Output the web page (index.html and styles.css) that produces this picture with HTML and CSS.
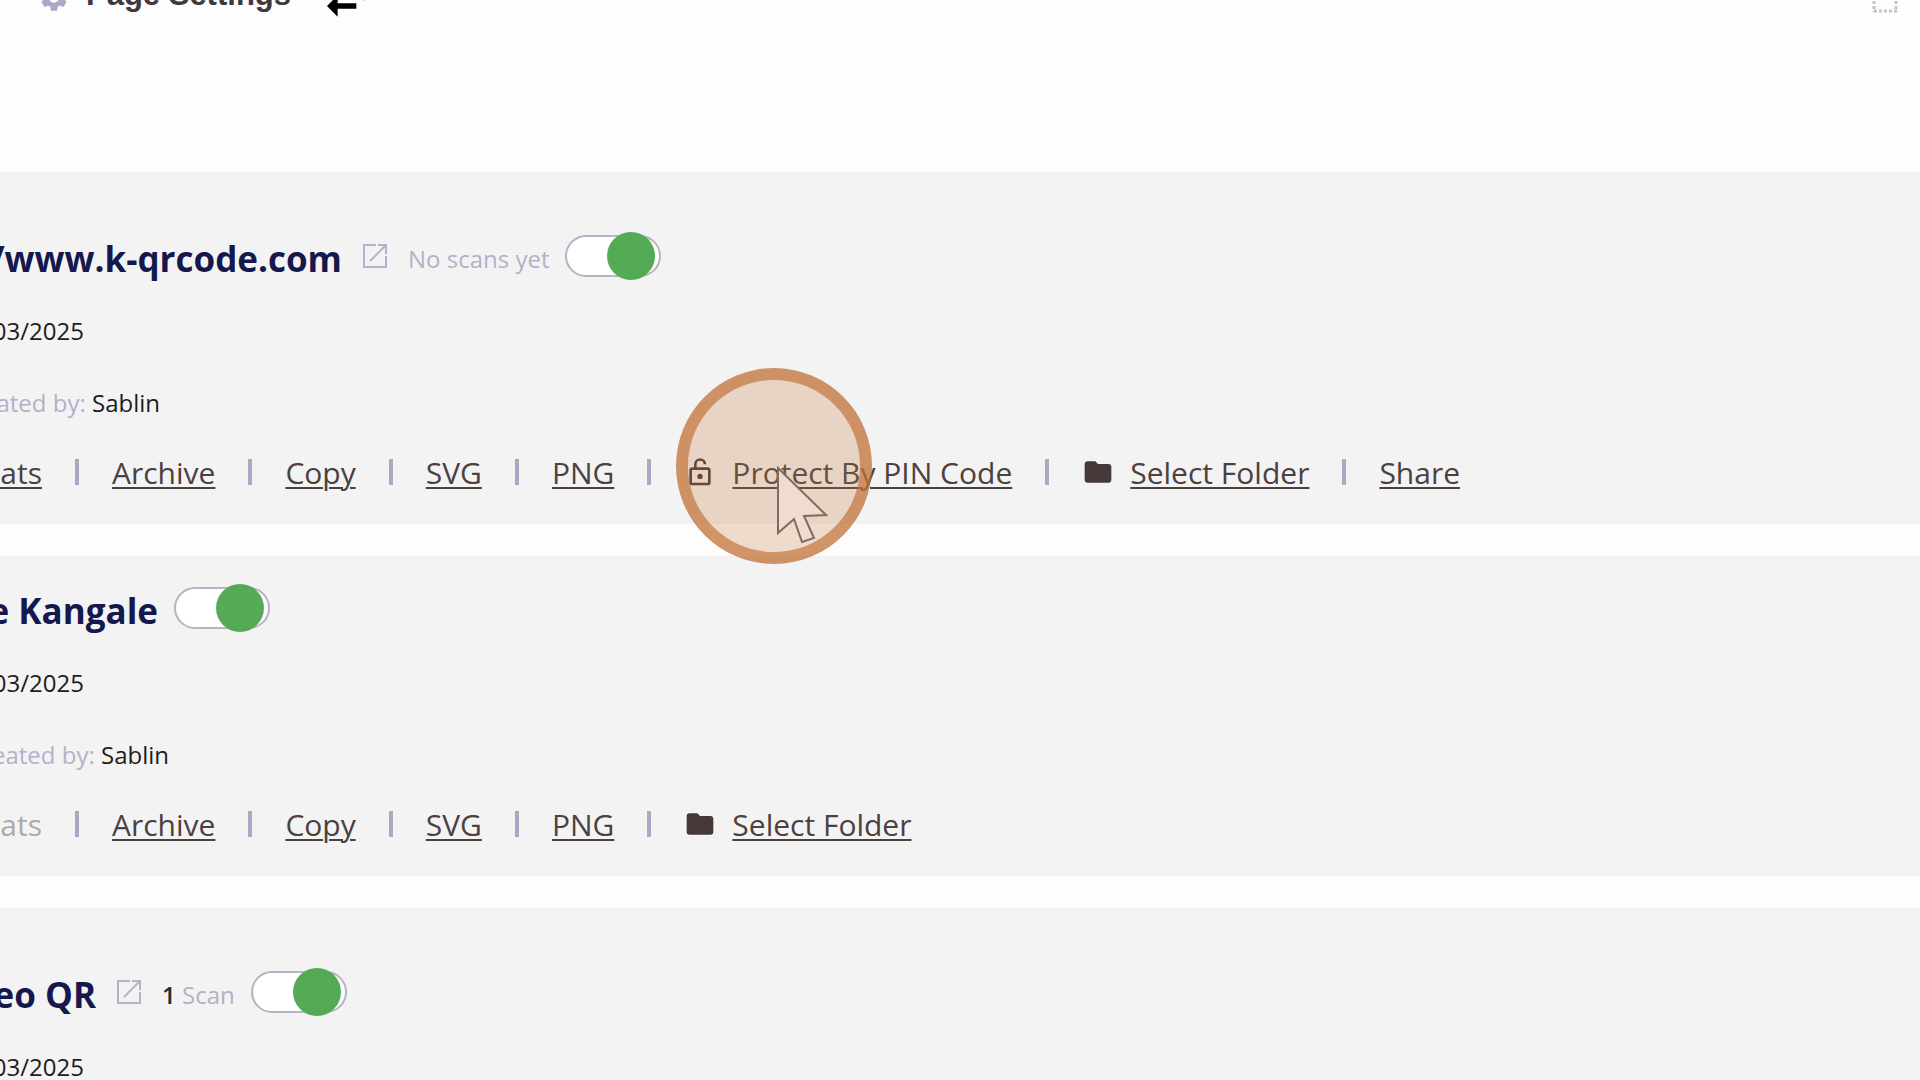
FILE: index.html
```html
<!DOCTYPE html>
<html lang="en">
<head>
    <meta charset="UTF-8">
    <meta name="viewport" content="width=device-width, initial-scale=1.0">
    <title>QR Codes</title>
    <link rel="stylesheet" href="styles.css">
</head>
<body>
    <svg class="sprite" aria-hidden="true">
        <symbol id="open" viewBox="0 0 24 24">
            <path d="M13 1H1v22h22V12M15 1h8v9M23 1L7 17" fill="none" stroke="currentColor" stroke-width="2"/>
        </symbol>
        <symbol id="folder" viewBox="0 0 24 24">
            <path d="M10 4H4c-1.1 0-2 .9-2 2v12c0 1.1.9 2 2 2h16c1.1 0 2-.9 2-2V8c0-1.1-.9-2-2-2h-8l-2-2z" fill="currentColor"/>
        </symbol>
    </svg>

    <header class="toolbar">
        <svg class="gear" viewBox="0 0 24 24"><path fill="currentColor" d="M19.14 12.94c.04-.3.06-.61.06-.94s-.02-.64-.07-.94l2.03-1.58c.18-.14.23-.41.12-.61l-1.92-3.32c-.12-.22-.37-.29-.59-.22l-2.39.96c-.5-.38-1.03-.7-1.62-.94l-.36-2.54c-.04-.24-.24-.41-.48-.41h-3.84c-.24 0-.43.17-.47.41l-.36 2.54c-.59.24-1.13.57-1.62.94l-2.39-.96c-.22-.08-.47 0-.59.22L2.74 8.87c-.12.21-.08.47.12.61l2.03 1.58c-.05.3-.09.63-.09.94s.02.64.07.94l-2.03 1.58c-.18.14-.23.41-.12.61l1.92 3.32c.12.22.37.29.59.22l2.39-.96c.5.38 1.03.7 1.62.94l.36 2.54c.05.24.24.41.48.41h3.84c.24 0 .44-.17.47-.41l.36-2.54c.59-.24 1.13-.56 1.62-.94l2.39.96c.22.08.47 0 .59-.22l1.92-3.32c.12-.22.07-.47-.12-.61l-2.01-1.58zM12 15.6c-1.98 0-3.6-1.62-3.6-3.6s1.62-3.6 3.6-3.6 3.6 1.62 3.6 3.6-1.62 3.6-3.6 3.6z"/></svg>
        <span class="toolbar-label">Page Settings</span>
        <svg class="swap" viewBox="0 0 24 24"><path d="M6.99 11L3 15l3.99 4v-3H14v-2H6.99v-3zM21 9l-3.99-4v3H10v2h7.01v3L21 9z"/></svg>
        <svg class="dots" viewBox="0 0 26 30"><path d="M2 3V29M24 3V29M2 28H26" fill="none" stroke="currentColor" stroke-width="3" stroke-dasharray="3 2"/></svg>
    </header>

    <main class="list">
        <section class="card card-tall">
            <div class="row title-row">
                <h2 class="cut cut-site">/www.k-qrcode.com</h2>
                <a class="open" href="#" aria-label="Open page"><svg><use href="#open"/></svg></a>
                <span class="scans">No scans yet</span>
                <input class="toggle" type="checkbox" aria-label="Active" checked>
            </div>
            <div class="row"><span class="cut cut-date">03/2025</span></div>
            <div class="row"><span class="cut cut-author"><span class="muted">ated by:</span>&nbsp;Sablin</span></div>
            <ul class="links">
                <li><a class="cut cut-stats" href="#">tats</a></li>
                <li><a href="#">Archive</a></li>
                <li><a href="#">Copy</a></li>
                <li><a href="#">SVG</a></li>
                <li><a href="#">PNG</a></li>
                <li>
                    <svg class="icon" viewBox="0 0 24 24"><path fill="currentColor" d="M18 8.5h-8.5V6.2a2.6 2.6 0 0 1 5.2 0h2A4.6 4.6 0 0 0 7.5 6.2v2.3H6c-1.1 0-2 .9-2 2v9.5c0 1.1.9 2 2 2h12c1.1 0 2-.9 2-2v-9.5c0-1.1-.9-2-2-2zM18 20H6v-9.5h12V20zm-6-2.7a2 2 0 1 0 0-4 2 2 0 0 0 0 4z"/></svg>
                    <a href="#">Protect By PIN Code</a>
                    <!-- click highlight with the mouse pointer -->
                    <div class="highlight">
                        <svg class="pointer" viewBox="0 0 52 78"><path d="M2 2V67L18 53L26 76L38 72L28 50L50 49Z"/></svg>
                    </div>
                </li>
                <li><svg class="icon"><use href="#folder"/></svg><a href="#">Select Folder</a></li>
                <li><a href="#">Share</a></li>
            </ul>
        </section>

        <section class="card">
            <div class="row title-row">
                <h2 class="cut cut-name">e Kangale</h2>
                <input class="toggle" type="checkbox" aria-label="Active" checked>
            </div>
            <div class="row"><span class="cut cut-date">03/2025</span></div>
            <div class="row"><span class="cut cut-author-wide"><span class="muted">eated by:</span>&nbsp;Sablin</span></div>
            <ul class="links">
                <li><span class="cut cut-stats disabled">tats</span></li>
                <li><a href="#">Archive</a></li>
                <li><a href="#">Copy</a></li>
                <li><a href="#">SVG</a></li>
                <li><a href="#">PNG</a></li>
                <li><svg class="icon"><use href="#folder"/></svg><a href="#">Select Folder</a></li>
            </ul>
        </section>

        <section class="card card-tall">
            <div class="row title-row">
                <h2 class="cut cut-video">eo QR</h2>
                <a class="open" href="#" aria-label="Open page"><svg><use href="#open"/></svg></a>
                <span class="scans"><b>1</b> Scan</span>
                <input class="toggle" type="checkbox" aria-label="Active" checked>
            </div>
            <div class="row"><span class="cut cut-date">03/2025</span></div>
        </section>
    </main>
</body>
</html>
```
FILE: styles.css
```css
html, body {
    margin: 0;
    padding: 0;
    height: 100%;
    overflow: hidden;
}
body {
    background-color: #fdfdfd;
    font-family: "Open Sans", "Noto Sans", sans-serif;
    font-size: 24px;
    color: #1c1c1c;
}
.sprite {
    display: none;
}

/* toolbar, scrolled half out of view */
.toolbar {
    display: flex;
    align-items: center;
    height: 64px;
    margin-top: -34px;
    margin-bottom: 142px;
    padding: 0 22px 0 38px;
}
.gear {
    width: 32px;
    height: 32px;
    margin-right: 16px;
    color: #aaa8c8;
}
.toolbar-label {
    padding-bottom: 6px;
    font-family: "Liberation Sans", Arial, sans-serif;
    font-size: 31px;
    font-weight: bold;
    color: #40383c;
}
.swap {
    width: 64px;
    height: 64px;
    margin-left: 28px;
}
.dots {
    width: 26px;
    height: 30px;
    margin-left: auto;
    color: #c4c2ca;
}

.list {
    display: flex;
    flex-direction: column;
    gap: 32px;
}
.card {
    padding: 18px 0;
    background-color: #f3f3f3;
}
.card-tall {
    padding-top: 50px;
}
.row {
    display: flex;
    align-items: center;
    height: 72px;
}

/* text that runs out past the left edge */
.cut {
    display: flex;
    justify-content: flex-end;
    white-space: nowrap;
}
.cut-site {
    width: 342px;
}
.cut-name {
    width: 158px;
}
.cut-video {
    width: 96px;
}
.cut-date {
    width: 84px;
}
.cut-author {
    width: 160px;
}
.cut-author-wide {
    width: 169px;
}
.cut-stats {
    width: 42px;
}

h2 {
    margin: 0;
    font-size: 35px;
    font-weight: bold;
    color: #14184d;
}
.open {
    display: flex;
    margin: 0 21px 4px;
    color: #b5b3c9;
}
.open svg {
    width: 24px;
    height: 24px;
}
.scans, .muted {
    color: #b3b1c8;
}
.scans b {
    font-weight: 600;
    color: #2a2a2a;
}
.toggle {
    appearance: none;
    display: flex;
    align-items: center;
    justify-content: flex-end;
    box-sizing: border-box;
    width: 96px;
    height: 42px;
    margin: 0 0 4px 16px;
    padding-right: 4px;
    border: 2px solid #b5b3c6;
    border-radius: 21px;
    background-color: white;
    cursor: pointer;
}
.toggle::before {
    content: "";
    flex: none;
    width: 48px;
    height: 48px;
    border-radius: 50%;
    background-color: #55ab55;
}
.toggle:not(:checked) {
    justify-content: flex-start;
}

.links {
    display: flex;
    align-items: center;
    height: 68px;
    margin: 0;
    padding: 0;
    list-style: none;
    font-size: 30px;
    color: #453839;
}
.links li {
    display: flex;
    align-items: center;
    position: relative;
    white-space: nowrap;
}
.links li + li::before {
    content: "";
    width: 4px;
    height: 26px;
    margin: 0 33px;
    background-color: #aca8c4;
}
.links a {
    color: #4a4140;
    text-decoration: underline;
    text-decoration-thickness: 2px;
    text-underline-offset: 3px;
}
.links .disabled {
    color: #aaa;
}
.icon {
    width: 32px;
    height: 32px;
    margin-right: 16px;
}

.highlight {
    position: absolute;
    left: 62px;
    top: 50%;
    box-sizing: border-box;
    width: 196px;
    height: 196px;
    margin-top: -104px;
    border: 12px solid rgba(192, 112, 54, 0.75);
    border-radius: 50%;
    background-color: rgba(195, 119, 55, 0.25);
    background-clip: padding-box;
    pointer-events: none;
}
.pointer {
    position: absolute;
    left: 88px;
    top: 86px;
    width: 52px;
    height: 78px;
    fill: #f0dccf;
    stroke: #7d6c60;
    stroke-width: 2;
}
```
